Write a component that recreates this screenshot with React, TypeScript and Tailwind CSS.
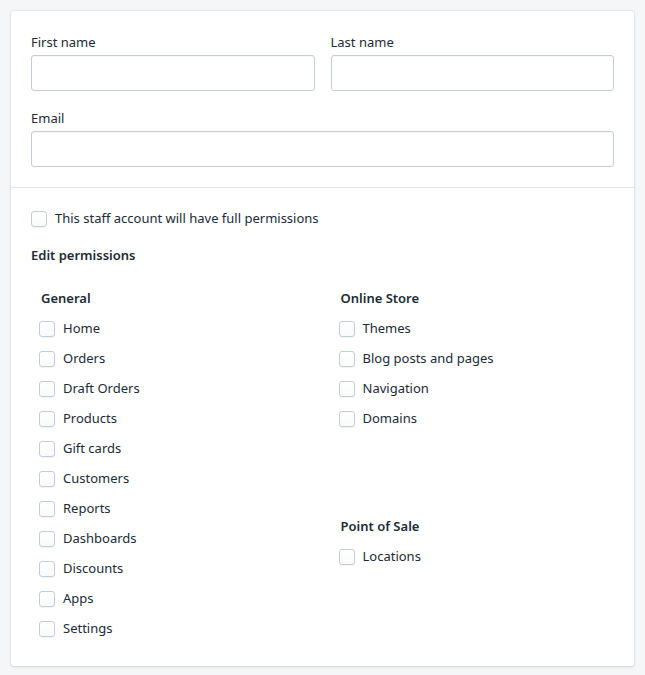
import React, { useState } from 'react';

const generalPerms = ['Home', 'Orders', 'Draft Orders', 'Products', 'Gift cards', 'Customers', 'Reports', 'Dashboards', 'Discounts', 'Apps', 'Settings'];
const onlineStorePerms = ['Themes', 'Blog posts and pages', 'Navigation', 'Domains'];
const posPerms = ['Locations'];

const Checkbox: React.FC<{ label: string }> = ({ label }) => {
    const [checked, setChecked] = useState(false);
    return (
        <label className="flex items-center h-5 cursor-pointer">
            <span
                onClick={() => setChecked(!checked)}
                className="w-4 h-4 rounded-[3px] border border-[#c4cdd5] bg-gradient-to-b from-white to-[#f9fafb] shadow-[0_1px_0_rgba(22,29,37,0.05)] flex items-center justify-center"
            >
                {checked && (
                    <svg viewBox="0 0 12 12" className="w-2.5 h-2.5" fill="none" stroke="#5c6ac4" strokeWidth="2">
                        <path d="M2 6l3 3 5-6" />
                    </svg>
                )}
            </span>
            <span className="ml-2 text-[#212b36] -translate-y-px">{label}</span>
        </label>
    );
};

const Field: React.FC<{ label: string; id: string }> = ({ label, id }) => (
    <div className="flex flex-col">
        <label htmlFor={id} className="text-[#212b36] leading-5 mb-[3px]">{label}</label>
        <input
            id={id}
            type="text"
            className="h-9 w-full px-3 bg-white border border-[#c4cdd5] rounded-[3px] shadow-[inset_0_1px_0_rgba(99,115,129,0.05)] focus:outline-none"
        />
    </div>
);

const PermGroup: React.FC<{ title: string; items: string[] }> = ({ title, items }) => (
    <div>
        <h3 className="font-semibold text-[#212b36] leading-5 mb-2.5 pl-0.5 -mt-px">{title}</h3>
        <div className="flex flex-col gap-2.5 pt-px">
            {items.map(item => <Checkbox key={item} label={item} />)}
        </div>
    </div>
);

const App: React.FC = () => {
    return (
        <div className="min-h-screen bg-[#f4f6f8] px-[11px] py-[11px] font-['Noto_Sans',sans-serif] text-[13px] leading-5">
            <div className="bg-white rounded-[3px] shadow-[0_0_0_1px_rgba(63,63,68,0.05),0_1px_3px_0_rgba(63,63,68,0.15)]">
                <div className="px-5 pt-[21px] pb-5 flex flex-col gap-[17px] border-b border-[#dfe3e8]">
                    <div className="grid grid-cols-2 gap-x-4">
                        <Field label="First name" id="firstName" />
                        <Field label="Last name" id="lastName" />
                    </div>
                    <Field label="Email" id="email" />
                </div>

                <div className="px-5 pt-[21px] pb-[27px]">
                    <Checkbox label="This staff account will have full permissions" />
                    <h2 className="font-semibold text-[#212b36] mt-4">Edit permissions</h2>

                    <div className="grid grid-cols-2 gap-x-4 mt-6">
                        <div className="pl-2">
                            <PermGroup title="General" items={generalPerms} />
                        </div>
                        <div className="pl-2 flex flex-col">
                            <PermGroup title="Online Store" items={onlineStorePerms} />
                            <div className="mt-[88px]">
                                <PermGroup title="Point of Sale" items={posPerms} />
                            </div>
                        </div>
                    </div>
                </div>
            </div>
        </div>
    );
};

export default App;
